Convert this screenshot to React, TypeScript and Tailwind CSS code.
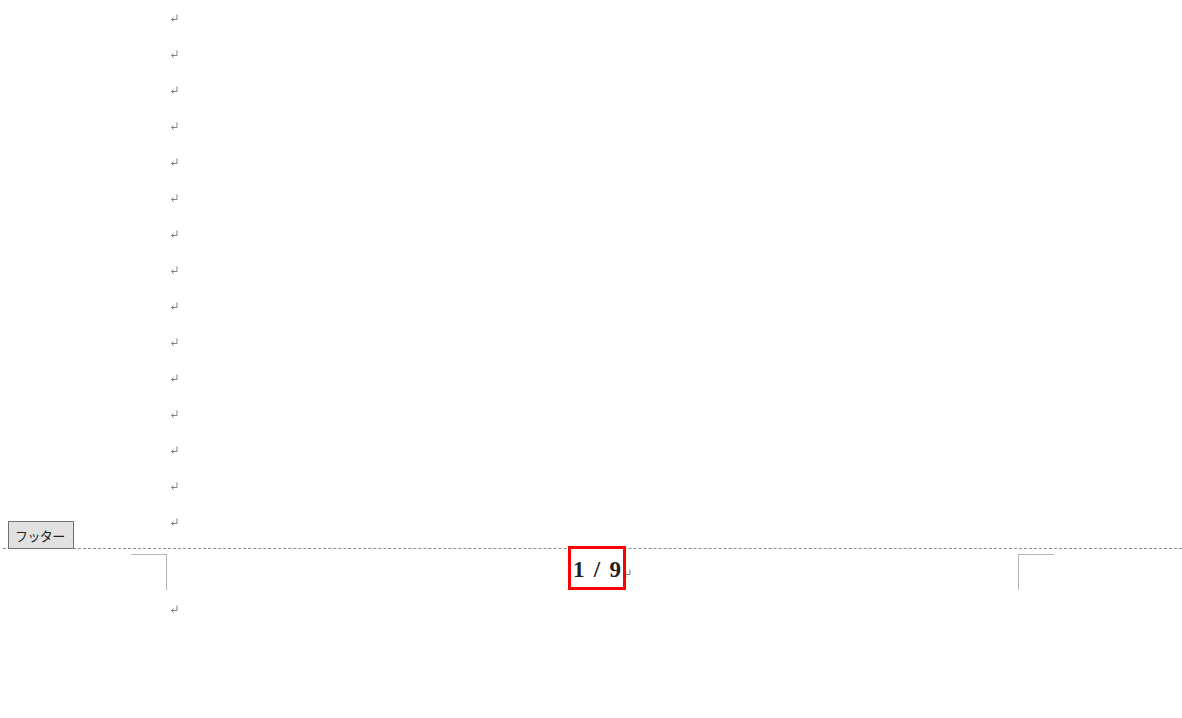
import React from "react";

function ReturnMark() {
  return (
    <svg width="8" height="8" viewBox="0 0 8 8" className="block" aria-hidden>
      <path d="M7 0.5 V5.5 H1.5" fill="none" stroke="#7f7f7f" strokeWidth="1" />
      <path d="M3.5 3.5 L1.5 5.5 L3.5 7.5" fill="none" stroke="#7f7f7f" strokeWidth="1" />
    </svg>
  );
}

function Row() {
  return (
    <div className="h-[36px] flex items-center pl-[170px]">
      <ReturnMark />
    </div>
  );
}

export default function App() {
  return (
    <div className="w-[1182px] h-[718px] bg-white overflow-hidden font-['Liberation_Sans',sans-serif]">
      {/* body paragraphs */}
      {Array.from({ length: 15 }).map((_, i) => (
        <Row key={i} />
      ))}

      {/* footer area */}
      <div className="relative pt-[8px]">
        <div className="absolute left-[8px] top-[-19px] h-[28px] w-[66px] border border-[#707070] bg-[#e1e1e1] flex items-center pl-[6px] text-[13px] tracking-[-0.6px] text-[#222] font-['Noto_Sans_CJK_JP',sans-serif] leading-none">
          フッター
        </div>
        <div className="ml-[3px] border-t border-dashed border-[#8c8c8c]" />

        <div className="flex h-[42px]">
          <div className="w-[131px]" />
          <div className="w-[36px] mt-[5px] border-t border-r border-[#b4b4b4] h-[36px]" />
          <div className="relative flex-1">
            <div className="absolute left-[401px] top-[-3px] h-[44px] w-[58px] border-[3px] border-[#ff0000]" />
            <div className="flex items-end pl-[406px] pt-[6px] h-[32px]">
              <span className="font-['Liberation_Serif',serif] font-bold text-[23px] leading-none text-[#222] whitespace-pre [word-spacing:3.5px]">
                1 / 9
              </span>
              <span className="ml-[2px] mb-[4px]">
                <ReturnMark />
              </span>
            </div>
          </div>
          <div className="w-[36px] mt-[5px] border-t border-l border-[#b4b4b4] h-[36px]" />
          <div className="w-[128px]" />
        </div>

        <Row />
      </div>
    </div>
  );
}
